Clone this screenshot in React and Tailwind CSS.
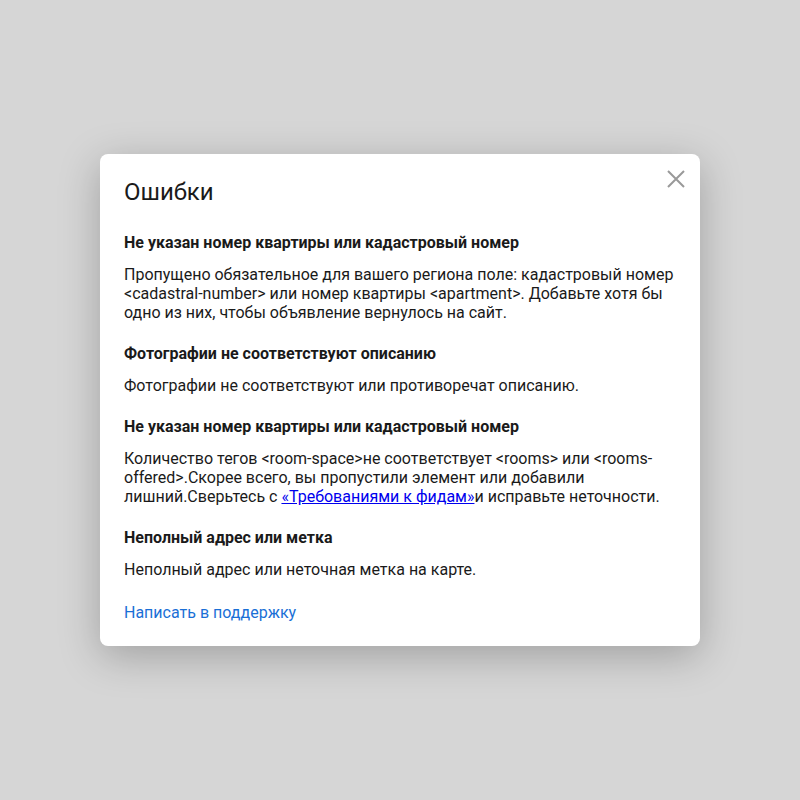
export default function App() {
  return (
    <div className="min-h-screen w-full bg-[#d6d6d6] flex items-center justify-center font-['Roboto',sans-serif] text-[#1a1a1a]">
      <div className="relative w-[600px] bg-white rounded-lg shadow-[0_10px_40px_rgba(0,0,0,0.25)] px-6 pt-6 pb-6">
        <button className="absolute right-[15px] top-4 w-[18px] h-[18px] flex items-center justify-center text-[#999]">
          <svg width="18" height="18" viewBox="0 0 18 18" fill="none" stroke="currentColor" strokeWidth="2">
            <path d="M1 1l16 16M17 1L1 17" />
          </svg>
        </button>

        <h1 className="text-2xl leading-7 font-normal mb-[27px]">Ошибки</h1>

        <div className="flex flex-col gap-[22px]">
          <section>
            <h2 className="text-base leading-5 font-bold mb-3">Не указан номер квартиры или кадастровый номер</h2>
            <p className="text-base leading-[19px]">
              Пропущено обязательное для вашего региона поле: кадастровый номер &lt;cadastral-number&gt; или номер квартиры &lt;apartment&gt;. Добавьте хотя бы одно из них, чтобы объявление вернулось на сайт.
            </p>
          </section>

          <section>
            <h2 className="text-base leading-5 font-bold mb-3">Фотографии не соответствуют описанию</h2>
            <p className="text-base leading-[19px]">Фотографии не соответствуют или противоречат описанию.</p>
          </section>

          <section>
            <h2 className="text-base leading-5 font-bold mb-3">Не указан номер квартиры или кадастровый номер</h2>
            <p className="text-base leading-[19px]">
              Количество тегов &lt;room-space&gt;не соответствует &lt;rooms&gt; или &lt;rooms-offered&gt;.Скорее всего, вы пропустили элемент или добавили лишний.Сверьтесь с{" "}
              <a href="#" className="text-[#0000ee] underline">«Требованиями к фидам»</a>и исправьте неточности.
            </p>
          </section>

          <section>
            <h2 className="text-base leading-5 font-bold mb-3">Неполный адрес или метка</h2>
            <p className="text-base leading-[19px]">Неполный адрес или неточная метка на карте.</p>
          </section>
        </div>

        <a href="#" className="block mt-6 text-base leading-[19px] text-[#1a6fd6]">Написать в поддержку</a>
      </div>
    </div>
  );
}
